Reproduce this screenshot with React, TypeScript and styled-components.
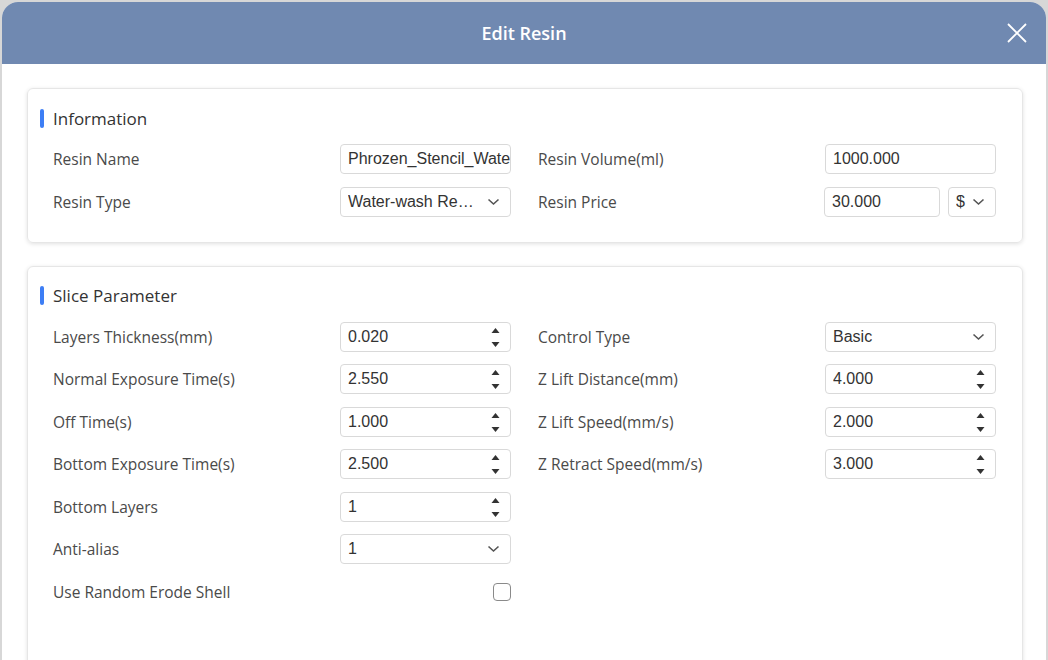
import React, { FC } from 'react';
import styled, { createGlobalStyle } from 'styled-components';

const GlobalStyle = createGlobalStyle`
  html, body {
    margin: 0;
    height: 660px;
    overflow: hidden;
    background: #d7d7d7;
  }
  * {
    box-sizing: border-box;
  }
`;

const Page = styled.div`
  padding: 2px 2px 0 2px;
  height: 660px;
`;

const Modal = styled.div`
  background: #ffffff;
  border-radius: 16px 16px 0 0;
  overflow: hidden;
  height: 700px;
`;

const Header = styled.div`
  height: 62px;
  background: #7089b1;
  display: flex;
  align-items: center;
  justify-content: center;
  position: relative;
`;

const HeaderTitle = styled.h1`
  margin: 0;
  color: #ffffff;
  font-family: 'Open Sans', sans-serif;
  font-size: 18px;
  font-weight: 600;
`;

const CloseButton = styled.button`
  position: absolute;
  right: 19px;
  top: 21px;
  width: 20px;
  height: 20px;
  padding: 0;
  border: none;
  background: transparent;
  display: flex;
  align-items: center;
  justify-content: center;
`;

const Body = styled.div`
  padding: 24px 23px 0 25px;
  display: flex;
  flex-direction: column;
  gap: 23px;
`;

const Card = styled.section<{ $bottom: number }>`
  border: 1px solid #e6e6e6;
  border-radius: 6px;
  box-shadow: 0 1px 4px rgba(0, 0, 0, 0.12);
  padding: 17px 26px ${(p) => p.$bottom}px 25px;
`;

const CardTitle = styled.h2`
  margin: 0 0 14px -13px;
  height: 24px;
  display: flex;
  align-items: center;
  gap: 9px;
  font-family: 'Open Sans', sans-serif;
  font-size: 17px;
  font-weight: 500;
  color: #333333;
`;

const TitleBar = styled.span`
  width: 4px;
  height: 19px;
  border-radius: 2px;
  background: #3d7ef5;
`;

const Grid = styled.div`
  display: grid;
  grid-template-columns: 1fr 1fr;
  column-gap: 27px;
  row-gap: 12.5px;
`;

const FieldRow = styled.div`
  display: flex;
  align-items: center;
  justify-content: space-between;
  height: 30px;
`;

const Label = styled.span`
  font-family: 'Open Sans', sans-serif;
  font-size: 15.5px;
  color: #4a4a4a;
`;

const Control = styled.div`
  width: 171px;
  display: flex;
  gap: 8px;
  justify-content: flex-end;
`;

const Box = styled.div<{ $width?: number; $right?: number }>`
  flex: ${(p) => (p.$width ? 'none' : '1')};
  width: ${(p) => (p.$width ? `${p.$width}px` : 'auto')};
  height: 30px;
  border: 1px solid #d9d9d9;
  border-radius: 4px;
  background: #ffffff;
  display: flex;
  align-items: center;
  padding: 0 ${(p) => p.$right ?? 10}px 0 7px;
  overflow: hidden;
`;

const TextInput = styled.input`
  flex: 1;
  min-width: 0;
  border: none;
  outline: none;
  padding: 0;
  background: transparent;
  font-family: 'Liberation Sans', Arial, sans-serif;
  font-size: 16px;
  color: #333333;
`;

const SelectText = styled.span<{ $gap: number }>`
  flex: 1;
  min-width: 0;
  margin-right: ${(p) => p.$gap}px;
  white-space: nowrap;
  overflow: hidden;
  text-overflow: ellipsis;
  font-family: 'Liberation Sans', Arial, sans-serif;
  font-size: 16px;
  color: #333333;
`;

const CheckBox = styled.span`
  width: 18px;
  height: 18px;
  border: 1.5px solid #8a8a8a;
  border-radius: 4px;
  background: #ffffff;
`;

const Empty = styled.div``;

const Chevron: FC = () => (
  <svg width="13" height="8" viewBox="0 0 13 8">
    <path d="M1.5 1.5 L6.5 6 L11.5 1.5" fill="none" stroke="#555" strokeWidth="1.6" />
  </svg>
);

const Spin: FC = () => (
  <svg width="9" height="22" viewBox="0 0 9 22">
    <path d="M4.5 2 L8.5 7 L0.5 7 Z" fill="#333" />
    <path d="M0.5 16 L8.5 16 L4.5 21 Z" fill="#333" />
  </svg>
);

const TextField: FC<{ value: string; width?: number }> = ({ value, width }) => (
  <Box $width={width} $right={0}>
    <TextInput defaultValue={value} />
  </Box>
);

const NumberField: FC<{ value: string }> = ({ value }) => (
  <Box>
    <TextInput defaultValue={value} />
    <Spin />
  </Box>
);

const SelectField: FC<{ value: string; width?: number; gap?: number }> = ({
  value,
  width,
  gap = 5,
}) => (
  <Box $width={width}>
    <SelectText $gap={gap}>{value}</SelectText>
    <Chevron />
  </Box>
);

const Field: FC<{ label: string; children: React.ReactNode }> = ({ label, children }) => (
  <FieldRow>
    <Label>{label}</Label>
    <Control>{children}</Control>
  </FieldRow>
);

export default function App() {
  return (
    <Page>
      <GlobalStyle />
      <Modal>
        <Header>
          <HeaderTitle>Edit Resin</HeaderTitle>
          <CloseButton>
            <svg width="20" height="20" viewBox="0 0 20 20">
              <path d="M1 1 L19 19 M19 1 L1 19" stroke="#fff" strokeWidth="1.8" />
            </svg>
          </CloseButton>
        </Header>
        <Body>
          <Card $bottom={25}>
            <CardTitle>
              <TitleBar />
              Information
            </CardTitle>
            <Grid>
              <Field label="Resin Name">
                <TextField value="Phrozen_Stencil_Water-wash" />
              </Field>
              <Field label="Resin Volume(ml)">
                <TextField value="1000.000" />
              </Field>
              <Field label="Resin Type">
                <SelectField value="Water-wash Resin" gap={10} />
              </Field>
              <Field label="Resin Price">
                <TextField value="30.000" width={116} />
                <SelectField value="$" width={48} gap={0} />
              </Field>
            </Grid>
          </Card>
          <Card $bottom={80}>
            <CardTitle>
              <TitleBar />
              Slice Parameter
            </CardTitle>
            <Grid>
              <Field label="Layers Thickness(mm)">
                <NumberField value="0.020" />
              </Field>
              <Field label="Control Type">
                <SelectField value="Basic" />
              </Field>
              <Field label="Normal Exposure Time(s)">
                <NumberField value="2.550" />
              </Field>
              <Field label="Z Lift Distance(mm)">
                <NumberField value="4.000" />
              </Field>
              <Field label="Off Time(s)">
                <NumberField value="1.000" />
              </Field>
              <Field label="Z Lift Speed(mm/s)">
                <NumberField value="2.000" />
              </Field>
              <Field label="Bottom Exposure Time(s)">
                <NumberField value="2.500" />
              </Field>
              <Field label="Z Retract Speed(mm/s)">
                <NumberField value="3.000" />
              </Field>
              <Field label="Bottom Layers">
                <NumberField value="1" />
              </Field>
              <Empty />
              <Field label="Anti-alias">
                <SelectField value="1" />
              </Field>
              <Empty />
              <Field label="Use Random Erode Shell">
                <CheckBox />
              </Field>
              <Empty />
            </Grid>
          </Card>
        </Body>
      </Modal>
    </Page>
  );
}
